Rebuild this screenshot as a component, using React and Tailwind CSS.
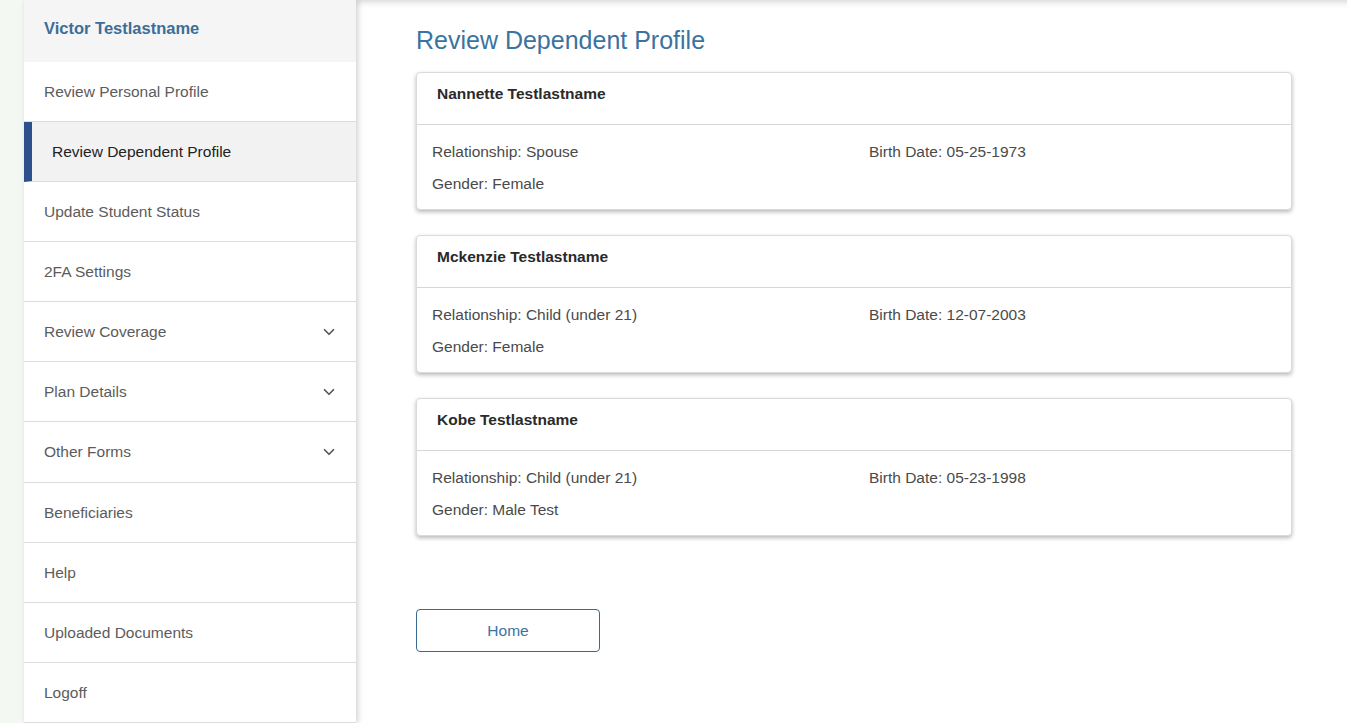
import { ChevronDown } from "lucide-react";

const navItems = [
  { label: "Review Personal Profile" },
  { label: "Review Dependent Profile", active: true },
  { label: "Update Student Status" },
  { label: "2FA Settings" },
  { label: "Review Coverage", caret: true },
  { label: "Plan Details", caret: true },
  { label: "Other Forms", caret: true },
  { label: "Beneficiaries" },
  { label: "Help" },
  { label: "Uploaded Documents" },
  { label: "Logoff" },
];

const dependents = [
  {
    name: "Nannette Testlastname",
    relationship: "Spouse",
    birth: "05-25-1973",
    gender: "Female",
  },
  {
    name: "Mckenzie Testlastname",
    relationship: "Child (under 21)",
    birth: "12-07-2003",
    gender: "Female",
  },
  {
    name: "Kobe Testlastname",
    relationship: "Child (under 21)",
    birth: "05-23-1998",
    gender: "Male Test",
  },
];

function NavItem({ item }) {
  if (item.active) {
    return (
      <div className="flex h-[60.2px] items-center border-b border-[#dcdcdc] border-l-[8px] border-l-[#2d4f8b] bg-[#f2f2f2] pl-[20px] text-[15.5px] text-[#222]">
        {item.label}
      </div>
    );
  }
  return (
    <div className="flex h-[60.2px] items-center justify-between border-b border-[#dcdcdc] pl-[20px] pr-[18px] text-[15.5px] text-[#5c5c5c]">
      <span>{item.label}</span>
      {item.caret && (
        <ChevronDown className="h-[18px] w-[18px] text-[#555]" strokeWidth={2.2} />
      )}
    </div>
  );
}

function DependentCard({ d }) {
  return (
    <div className="rounded-[4px] border border-[#dadada] bg-white shadow-[0_2px_4px_rgba(0,0,0,0.28)]">
      <div className="h-[52px] border-b border-[#d6d6d6] px-[20px] pt-[11px] text-[15.5px] font-bold leading-[20px] text-[#2a2a2a]">
        {d.name}
      </div>
      <div className="grid grid-cols-2 pb-[14px] pt-[16px] text-[15.5px] text-[#4a4a4a]">
        <div className="flex flex-col gap-[10px] px-[15px]">
          <div className="leading-[22px]">Relationship: {d.relationship}</div>
          <div className="leading-[22px]">Gender: {d.gender}</div>
        </div>
        <div className="px-[15px]">
          <div className="leading-[22px]">Birth Date: {d.birth}</div>
        </div>
      </div>
    </div>
  );
}

export default function App() {
  return (
    <div
      className="flex h-[723px] w-full overflow-hidden bg-[#f4f8f2]"
      style={{ fontFamily: '"Liberation Sans", Arial, sans-serif' }}
    >
      {/* LEFT STRIP */}
      <div className="w-[24px] shrink-0" />

      {/* SIDEBAR */}
      <aside className="z-10 flex w-[332px] shrink-0 flex-col bg-white shadow-[2px_0_6px_rgba(0,0,0,0.18)]">
        <div className="flex h-[62px] items-center bg-[#f5f5f5] pb-[6px] pl-[20px] text-[16.5px] font-bold text-[#3b6e98]">
          Victor Testlastname
        </div>
        {navItems.map((item) => (
          <NavItem key={item.label} item={item} />
        ))}
      </aside>

      {/* MAIN */}
      <main className="flex-1 bg-white pl-[60px] pr-[55px] shadow-[inset_0_8px_8px_-8px_rgba(0,0,0,0.25)]">
        <h1 className="mt-[25px] text-[25px] leading-[30px] text-[#3b73a0]">
          Review Dependent Profile
        </h1>
        <div className="mt-[17px] flex flex-col gap-[25px]">
          {dependents.map((d) => (
            <DependentCard key={d.name} d={d} />
          ))}
        </div>
        <button className="mt-[73px] h-[43px] w-[184px] rounded-[4px] border border-[#3a6a91] text-[15.5px] text-[#3b73a0]">
          Home
        </button>
      </main>
    </div>
  );
}
